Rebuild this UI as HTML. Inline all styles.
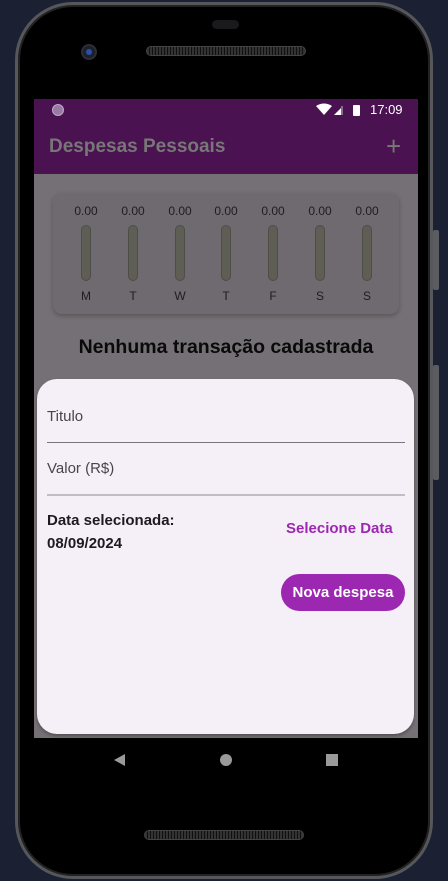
<!DOCTYPE html>
<html><head><meta charset="utf-8"><style>
*{margin:0;padding:0;box-sizing:border-box}
body{width:448px;height:881px;background:#1b2133;position:relative;overflow:hidden;font-family:"Liberation Sans",sans-serif}
.abs{position:absolute}
.phone{left:15px;top:2px;width:418px;height:877px;background:#000;border-radius:58px;border:3px solid #55575b;box-shadow:inset 0 0 0 2px #222}
.screen{left:34px;top:99px;width:384px;height:639px;background:#757075;overflow:hidden}
.bar{width:10px;height:56px;border-radius:5px;background:#5f5e55;border:1px solid #4e4d48;top:32px}
.val{font-size:12px;color:#1e1e1e;top:11px;width:40px;text-align:center}
.lbl{font-size:12px;color:#1e1e1e;top:96px;width:40px;text-align:center}
</style></head><body>
<div class="abs" style="left:433px;top:230px;width:6px;height:60px;background:#5a5c60;border-radius:2px"></div>
<div class="abs" style="left:433px;top:365px;width:6px;height:115px;background:#5a5c60;border-radius:2px"></div>
<div class="abs phone"></div>
<div class="abs" style="left:212px;top:20px;width:27px;height:9px;background:#1a1a1c;border-radius:5px"></div>
<div class="abs" style="left:81px;top:44px;width:16px;height:16px;border-radius:50%;background:#1d1f2a;border:2px solid #2c2e36"><div style="margin:3px;width:6px;height:6px;border-radius:50%;background:#2b4fa8"></div></div>
<div class="abs" style="left:146px;top:46px;width:160px;height:10px;border-radius:5px;border:1px solid #444;background:repeating-linear-gradient(90deg,#333 0 2px,#111 2px 3px)"></div>
<div class="abs" style="left:144px;top:830px;width:160px;height:10px;border-radius:5px;border:1px solid #444;background:repeating-linear-gradient(90deg,#333 0 2px,#111 2px 3px)"></div>
<div class="abs" style="left:114px;top:754px;width:0;height:0;border-top:6px solid transparent;border-bottom:6px solid transparent;border-right:11px solid #9a9a9a"></div>
<div class="abs" style="left:220px;top:754px;width:12px;height:12px;border-radius:50%;background:#9a9a9a"></div>
<div class="abs" style="left:326px;top:754px;width:12px;height:12px;background:#9a9a9a"></div>
<div class="abs screen">
 <div class="abs" style="left:0;top:0;width:384px;height:75px;background:#4a1251"></div>
 <div class="abs" style="left:18px;top:5px;width:12px;height:12px;border-radius:50%;background:#9a7aa5;border:1px solid #c0a8c8"></div>
 <svg class="abs" style="left:282px;top:4px" width="60" height="14"><path d="M0 3 Q8 -2 16 3 L8 12Z" fill="#fff"/><path d="M18 12 L27 3 L27 12Z" fill="#fff"/><rect x="25" y="3" width="2" height="9" fill="#8a6a90"/><rect x="37" y="2" width="7" height="11" rx="1" fill="#fff"/></svg>
 <div class="abs" style="left:336px;top:3px;font-size:13px;color:#fff">17:09</div>
 <div class="abs" style="left:15px;top:37px;font-size:19px;font-weight:bold;color:#777">Despesas Pessoais</div>
 <div class="abs" style="left:352px;top:32px;font-size:26px;color:#777">+</div>
 <div class="abs" style="left:19px;top:94px;width:346px;height:121px;background:#6e6a70;border-radius:9px;box-shadow:0 2px 5px rgba(0,0,0,.25)">
  <div class="abs val" style="left:13px">0.00</div><div class="abs val" style="left:60px">0.00</div><div class="abs val" style="left:107px">0.00</div><div class="abs val" style="left:153px">0.00</div><div class="abs val" style="left:200px">0.00</div><div class="abs val" style="left:247px">0.00</div><div class="abs val" style="left:294px">0.00</div>
  <div class="abs bar" style="left:28px"></div><div class="abs bar" style="left:75px"></div><div class="abs bar" style="left:122px"></div><div class="abs bar" style="left:168px"></div><div class="abs bar" style="left:215px"></div><div class="abs bar" style="left:262px"></div><div class="abs bar" style="left:309px"></div>
  <div class="abs lbl" style="left:13px">M</div><div class="abs lbl" style="left:60px">T</div><div class="abs lbl" style="left:107px">W</div><div class="abs lbl" style="left:153px">T</div><div class="abs lbl" style="left:200px">F</div><div class="abs lbl" style="left:247px">S</div><div class="abs lbl" style="left:294px">S</div>
 </div>
 <div class="abs" style="left:0;top:237px;width:384px;text-align:center;font-size:19.5px;font-weight:bold;color:#0a0a0a">Nenhuma transação cadastrada</div>
 <div class="abs" style="left:3px;top:280px;width:377px;height:355px;background:#f5f0f7;border-radius:20px;box-shadow:0 2px 3px rgba(0,0,0,.3)">
  <div class="abs" style="left:10px;top:29px;font-size:15px;color:#49454f">Titulo</div>
  <div class="abs" style="left:10px;top:63px;width:358px;height:1px;background:#79747e"></div>
  <div class="abs" style="left:10px;top:81px;font-size:15px;color:#49454f">Valor (R$)</div>
  <div class="abs" style="left:10px;top:115px;width:358px;height:2px;background:#c2bcc6"></div>
  <div class="abs" style="left:10px;top:130px;font-size:15px;font-weight:bold;color:#1d1b20;line-height:23px">Data selecionada:<br>08/09/2024</div>
  <div class="abs" style="left:249px;top:141px;font-size:15px;font-weight:bold;color:#9c27b0">Selecione Data</div>
  <div class="abs" style="left:244px;top:195px;width:124px;height:37px;border-radius:19px;background:#9c27b0;color:#fff;font-size:15px;font-weight:bold;text-align:center;line-height:37px">Nova despesa</div>
 </div>
</div>
</body></html>
